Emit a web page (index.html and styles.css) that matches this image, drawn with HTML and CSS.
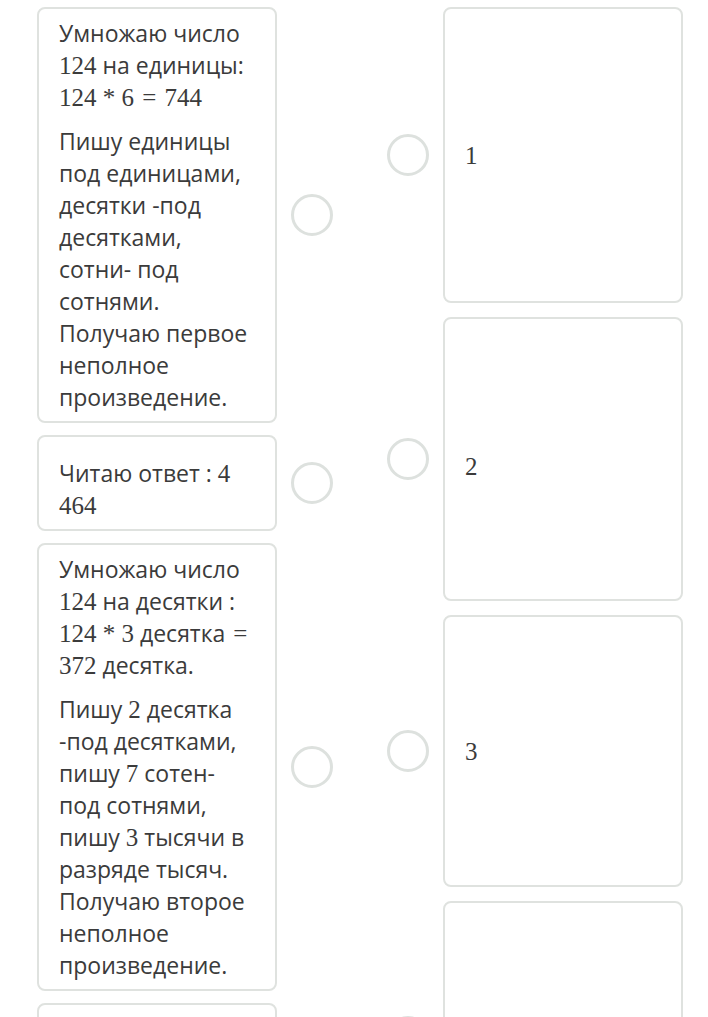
FILE: index.html
```html
<!DOCTYPE html>
<html lang="ru">
<head>
<meta charset="utf-8">
<link rel="stylesheet" href="styles.css">
</head>
<body>
<div class="match">
  <div class="col col-left">
    <div class="item">
      <div class="card">
        <p>Умножаю число<br><span class="m">124</span> на единицы:<br><span class="m">124 * 6 <span class="rel">=</span> 744</span></p>
        <p>Пишу единицы<br>под единицами,<br>десятки -под<br>десятками,<br>сотни- под<br>сотнями.<br>Получаю первое<br>неполное<br>произведение.</p>
      </div>
      <span class="radio"></span>
    </div>
    <div class="item">
      <div class="card card-short">
        <p>Читаю ответ : <span class="m">4</span><br><span class="m">464</span></p>
      </div>
      <span class="radio"></span>
    </div>
    <div class="item">
      <div class="card">
        <p>Умножаю число<br><span class="m">124</span> на десятки :<br><span class="m">124 * 3</span> десятка <span class="m rel">=</span><br><span class="m">372</span> десятка.</p>
        <p>Пишу <span class="m">2</span> десятка<br>-под десятками,<br>пишу <span class="m">7</span> сотен-<br>под сотнями,<br>пишу <span class="m">3</span> тысячи в<br>разряде тысяч.<br>Получаю второе<br>неполное<br>произведение.</p>
      </div>
      <span class="radio"></span>
    </div>
    <div class="item">
      <div class="card card-empty"></div>
      <span class="radio"></span>
    </div>
  </div>
  <div class="col col-right">
    <div class="item">
      <span class="radio"></span>
      <div class="card card-num h1"><span class="m">1</span></div>
    </div>
    <div class="item">
      <span class="radio"></span>
      <div class="card card-num h2"><span class="m">2</span></div>
    </div>
    <div class="item">
      <span class="radio"></span>
      <div class="card card-num h3"><span class="m">3</span></div>
    </div>
    <div class="item">
      <span class="radio"></span>
      <div class="card card-num h3"></div>
    </div>
  </div>
</div>
</body>
</html>
```

FILE: styles.css
```css
html, body {
  margin: 0;
  padding: 0;
  background: #ffffff;
}

body {
  font-family: "Open Sans", "Noto Sans", sans-serif;
  font-size: 23px;
  line-height: 32px;
  color: #3b3b3b;
  overflow: hidden;
}

.match {
  display: flex;
  align-items: flex-start;
  gap: 54px;
  padding: 7px 0 0 37px;
}

.col {
  display: flex;
  flex-direction: column;
}

.col-left {
  gap: 12px;
}

.col-right {
  gap: 14px;
}

.item {
  display: flex;
  align-items: center;
  gap: 14px;
}

.card {
  box-sizing: border-box;
  width: 240px;
  border: 2px solid #dfe2df;
  border-radius: 8px;
  background: #ffffff;
  padding: 8px 10px 8px 20px;
}

.card p {
  margin: 0;
}

.card p + p {
  margin-top: 12px;
}

.card-short {
  padding-top: 20px;
}

.card-empty {
  height: 120px;
}

.card-num {
  display: flex;
  align-items: center;
  padding: 0 20px;
}

.h1 { height: 296px; }
.h2 { height: 284px; padding-top: 14px; }
.h3 { height: 272px; }

.m {
  font-family: "Liberation Serif", "DejaVu Serif", serif;
  font-size: 25px;
  line-height: 1;
}

.rel {
  margin: 0 2px;
}

.radio {
  box-sizing: border-box;
  flex: none;
  width: 42px;
  height: 42px;
  border: 3px solid #dde1de;
  border-radius: 50%;
  background: #ffffff;
}
```
